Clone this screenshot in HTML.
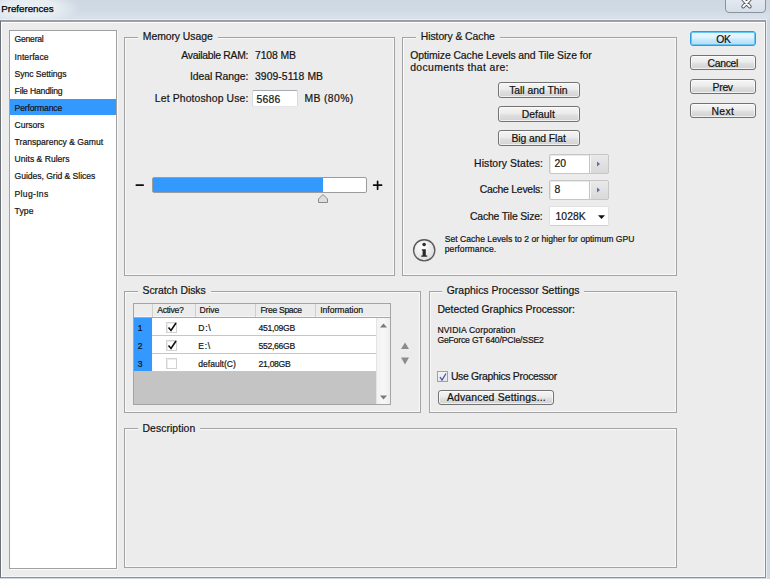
<!DOCTYPE html>
<html><head><meta charset="utf-8"><style>
html,body{margin:0;padding:0;width:770px;height:579px;overflow:hidden;background:#cfd9e4;}
body{position:relative;font-family:"Liberation Sans",sans-serif;}
.r{position:absolute;}
.t{position:absolute;white-space:nowrap;-webkit-text-stroke:0.2px currentColor;}
</style></head><body>
<div class="r" style="left:0px;top:0px;width:770px;height:579px;background:linear-gradient(#ced8e3,#d0dae5 10px,#d9e1ea 18px,#cfd9e4 20px,#cfd9e4);"></div>
<div class="r" style="left:-20px;top:-8px;width:100px;height:32px;background:radial-gradient(closest-side,rgba(236,241,246,0.95),rgba(236,241,246,0.8) 55%,rgba(236,241,246,0));"></div>
<div class="t" style="left:1.20px;top:3.60px;font-size:9.8px;line-height:9.8px;color:#000;letter-spacing:-0.032px;-webkit-text-stroke:0.25px #000;">Preferences</div>
<div class="r" style="left:725px;top:-2px;width:41px;height:15px;border:1px solid #8a949f;border-radius:0 0 4px 4px;background:linear-gradient(#e4eaf1,#d6dee8);box-sizing:border-box"></div>
<svg class="r" style="left:740px;top:-2px" width="13" height="12" viewBox="0 0 13 12"><path d="M3.3 1.5 L9.7 8.5 M9.7 1.5 L3.3 8.5" stroke="#4d525a" stroke-width="3.8" stroke-linecap="round"/><path d="M3.3 1.5 L9.7 8.5 M9.7 1.5 L3.3 8.5" stroke="#fbfbfb" stroke-width="2" stroke-linecap="round"/></svg>
<div class="r" style="left:0px;top:19px;width:766px;height:1px;background:#e8eef6;"></div>
<div class="r" style="left:766px;top:19px;width:1px;height:560px;background:#e6edf5;"></div>
<div class="r" style="left:0px;top:20px;width:766px;height:558px;background:#ececec;border:1px solid #8d9196;border-top:2px solid #9b9ea3;border-left-color:#6b7078;box-sizing:border-box;box-shadow:inset 1px 1px 0 #fff, inset -1px -1px 0 #f8f8f8;"></div>
<div class="r" style="left:9px;top:30px;width:108px;height:539px;background:#fff;border:1px solid #a0a0a0;box-sizing:border-box;box-shadow:1px 1px 0 #fafafa;"></div>
<div class="r" style="left:10px;top:99px;width:106px;height:16px;background:#3399ff;"></div>
<div class="t" style="left:14.60px;top:35.42px;font-size:8.6px;line-height:8.6px;color:#141414;letter-spacing:-0.244px;">General</div>
<div class="t" style="left:14.60px;top:52.55px;font-size:8.6px;line-height:8.6px;color:#141414;letter-spacing:0.068px;">Interface</div>
<div class="t" style="left:14.60px;top:69.68px;font-size:8.6px;line-height:8.6px;color:#141414;letter-spacing:-0.054px;">Sync Settings</div>
<div class="t" style="left:14.60px;top:86.81px;font-size:8.6px;line-height:8.6px;color:#141414;letter-spacing:-0.181px;">File Handling</div>
<div class="t" style="left:14.60px;top:103.94px;font-size:8.6px;line-height:8.6px;color:#141414;letter-spacing:-0.152px;">Performance</div>
<div class="t" style="left:14.60px;top:121.07px;font-size:8.6px;line-height:8.6px;color:#141414;letter-spacing:-0.064px;">Cursors</div>
<div class="t" style="left:14.60px;top:138.20px;font-size:8.6px;line-height:8.6px;color:#141414;">Transparency &amp; Gamut</div>
<div class="t" style="left:14.60px;top:155.33px;font-size:8.6px;line-height:8.6px;color:#141414;">Units &amp; Rulers</div>
<div class="t" style="left:14.60px;top:172.46px;font-size:8.6px;line-height:8.6px;color:#141414;letter-spacing:-0.049px;">Guides, Grid &amp; Slices</div>
<div class="t" style="left:14.60px;top:189.59px;font-size:8.6px;line-height:8.6px;color:#141414;letter-spacing:0.296px;">Plug-Ins</div>
<div class="t" style="left:14.60px;top:206.72px;font-size:8.6px;line-height:8.6px;color:#141414;letter-spacing:0.083px;">Type</div>
<div class="r" style="left:124px;top:37px;width:271px;height:239px;border:1px solid #a3a3a3;box-sizing:border-box;box-shadow: inset 0 0 0 1px #f9f9f9;"></div>
<div class="r" style="left:137.8px;top:34px;width:80.1px;height:6px;background:#ececec;"></div>
<div class="t" style="left:142.80px;top:32.49px;font-size:10.4px;line-height:10.4px;color:#141414;letter-spacing:-0.052px;">Memory Usage</div>
<div class="t" style="left:181.30px;top:51.49px;font-size:10.4px;line-height:10.4px;color:#141414;letter-spacing:-0.289px;">Available RAM:</div>
<div class="t" style="left:255.00px;top:51.49px;font-size:10.4px;line-height:10.4px;color:#141414;letter-spacing:-0.093px;">7108 MB</div>
<div class="t" style="left:189.90px;top:71.79px;font-size:10.4px;line-height:10.4px;color:#141414;letter-spacing:-0.040px;">Ideal Range:</div>
<div class="t" style="left:255.00px;top:71.79px;font-size:10.4px;line-height:10.4px;color:#141414;letter-spacing:0.058px;">3909-5118 MB</div>
<div class="t" style="left:154.80px;top:94.09px;font-size:10.4px;line-height:10.4px;color:#141414;letter-spacing:0.136px;">Let Photoshop Use:</div>
<div class="r" style="left:252px;top:90px;width:46px;height:17px;background:#fff;border:1px solid #d5d9dd;border-top-color:#a4abb3;border-bottom-color:#e4e6e8;border-radius:2px;box-sizing:border-box;"></div>
<div class="t" style="left:256.60px;top:94.79px;font-size:10.4px;line-height:10.4px;color:#141414;letter-spacing:0.188px;">5686</div>
<div class="t" style="left:304.40px;top:94.09px;font-size:10.4px;line-height:10.4px;color:#141414;letter-spacing:0.382px;">MB (80%)</div>
<svg class="r" style="left:130px;top:175px" width="260" height="20" viewBox="130 175 260 20"><path d="M136.3 185.1 H143.2 M373.6 185.1 H381.6 M377.6 181.3 V189.2" stroke="#0d0d0d" stroke-width="1.7" stroke-linecap="round"/></svg>
<div class="r" style="left:152px;top:177px;width:215px;height:16px;background:#fff;border:1px solid #9c9c9c;border-radius:2px;box-sizing:border-box;"></div>
<div class="r" style="left:153px;top:178px;width:170px;height:14px;background:#3399ff;"></div>
<svg class="r" style="left:317px;top:193px" width="12" height="11" viewBox="0 0 12 11"><path d="M1.5 9.5 L1.5 6 L6 1.5 L10.5 6 L10.5 9.5 Z" fill="#dedede" stroke="#8a8a8a" stroke-width="1" stroke-linejoin="round"/></svg>
<div class="r" style="left:402px;top:37px;width:275px;height:239px;border:1px solid #a3a3a3;box-sizing:border-box;box-shadow: inset 0 0 0 1px #f9f9f9;"></div>
<div class="r" style="left:415.8px;top:34px;width:84.3px;height:6px;background:#ececec;"></div>
<div class="t" style="left:420.80px;top:32.49px;font-size:10.4px;line-height:10.4px;color:#141414;letter-spacing:-0.071px;">History &amp; Cache</div>
<div class="t" style="left:410.20px;top:51.49px;font-size:10.4px;line-height:10.4px;color:#141414;letter-spacing:-0.070px;">Optimize Cache Levels and Tile Size for</div>
<div class="t" style="left:410.20px;top:63.19px;font-size:10.4px;line-height:10.4px;color:#141414;letter-spacing:0.358px;">documents that are:</div>
<div class="r" style="left:498px;top:82px;width:82px;height:16px;border:1px solid #727272;border-radius:3px;background:linear-gradient(#f5f5f5 0%,#ececec 45%,#dedede 60%,#d2d2d2 100%);box-shadow:inset 0 0 0 1px rgba(255,255,255,.65);box-sizing:border-box;"></div>
<div class="t" style="left:509.20px;top:86.39px;font-size:10.4px;line-height:10.4px;color:#111;letter-spacing:-0.036px;">Tall and Thin</div>
<div class="r" style="left:498px;top:106px;width:82px;height:16px;border:1px solid #727272;border-radius:3px;background:linear-gradient(#f5f5f5 0%,#ececec 45%,#dedede 60%,#d2d2d2 100%);box-shadow:inset 0 0 0 1px rgba(255,255,255,.65);box-sizing:border-box;"></div>
<div class="t" style="left:521.80px;top:110.39px;font-size:10.4px;line-height:10.4px;color:#111;letter-spacing:0.011px;">Default</div>
<div class="r" style="left:498px;top:130px;width:82px;height:16px;border:1px solid #727272;border-radius:3px;background:linear-gradient(#f5f5f5 0%,#ececec 45%,#dedede 60%,#d2d2d2 100%);box-shadow:inset 0 0 0 1px rgba(255,255,255,.65);box-sizing:border-box;"></div>
<div class="t" style="left:511.40px;top:134.39px;font-size:10.4px;line-height:10.4px;color:#111;letter-spacing:-0.087px;">Big and Flat</div>
<div class="t" style="left:474.10px;top:159.29px;font-size:10.4px;line-height:10.4px;color:#141414;letter-spacing:0.095px;">History States:</div>
<div class="t" style="left:479.70px;top:185.49px;font-size:10.4px;line-height:10.4px;color:#141414;letter-spacing:-0.221px;">Cache Levels:</div>
<div class="t" style="left:470.00px;top:211.89px;font-size:10.4px;line-height:10.4px;color:#141414;letter-spacing:-0.159px;">Cache Tile Size:</div>
<div class="r" style="left:549px;top:154px;width:60px;height:20px;background:#fff;border:1px solid #c6c6c6;border-radius:2px;box-sizing:border-box;box-shadow:inset 1px 1px 0 #e9e9e9;"></div>
<div class="r" style="left:589px;top:155px;width:19px;height:18px;background:linear-gradient(#e9e9e9,#d9d9d9);border-left:1px solid #c4c4c4;box-sizing:border-box;box-shadow:inset 1px 0 0 #f6f6f6;"></div>
<svg class="r" style="left:596px;top:161px" width="5" height="6" viewBox="0 0 5 6"><path d="M1 0.5 L4 3 L1 5.5 Z" fill="#5a6fa8"/></svg>
<div class="t" style="left:554.50px;top:159.29px;font-size:10.4px;line-height:10.4px;color:#141414;">20</div>
<div class="r" style="left:549px;top:180px;width:60px;height:20px;background:#fff;border:1px solid #c6c6c6;border-radius:2px;box-sizing:border-box;box-shadow:inset 1px 1px 0 #e9e9e9;"></div>
<div class="r" style="left:589px;top:181px;width:19px;height:18px;background:linear-gradient(#e9e9e9,#d9d9d9);border-left:1px solid #c4c4c4;box-sizing:border-box;box-shadow:inset 1px 0 0 #f6f6f6;"></div>
<svg class="r" style="left:596px;top:187px" width="5" height="6" viewBox="0 0 5 6"><path d="M1 0.5 L4 3 L1 5.5 Z" fill="#5a6fa8"/></svg>
<div class="t" style="left:554.50px;top:185.49px;font-size:10.4px;line-height:10.4px;color:#141414;">8</div>
<div class="r" style="left:549px;top:206px;width:60px;height:20px;background:#fff;border:1px solid #e0e0e0;border-bottom-color:#d0d0d0;border-radius:2px;box-sizing:border-box;"></div>
<div class="t" style="left:555.60px;top:211.89px;font-size:10.4px;line-height:10.4px;color:#141414;">1028K</div>
<svg class="r" style="left:598px;top:215px" width="7" height="4" viewBox="0 0 7 4"><path d="M0 0.3 L7 0.3 L3.5 4 Z" fill="#111"/></svg>
<svg class="r" style="left:412px;top:238px" width="25" height="25" viewBox="0 0 25 25"><defs><radialGradient id="ig" cx="40%" cy="35%" r="70%"><stop offset="0" stop-color="#ffffff"/><stop offset="1" stop-color="#dcdcdc"/></radialGradient></defs><circle cx="12.2" cy="12.3" r="10.6" fill="url(#ig)" stroke="#5a5a5a" stroke-width="1.4"/><circle cx="12.1" cy="6.4" r="1.75" fill="#2a2a2a"/><path d="M9.8 11.2 H13.8 V17.4 H15.2 V18.8 H9.2 V17.4 H10.6 V12.4 H9.8 Z" fill="#2a2a2a"/></svg>
<div class="t" style="left:444.70px;top:234.62px;font-size:8.6px;line-height:8.6px;color:#141414;letter-spacing:0.014px;">Set Cache Levels to 2 or higher for optimum GPU</div>
<div class="t" style="left:444.70px;top:244.52px;font-size:8.6px;line-height:8.6px;color:#141414;letter-spacing:0.078px;">performance.</div>
<div class="r" style="left:124px;top:291px;width:297px;height:122px;border:1px solid #a3a3a3;box-sizing:border-box;box-shadow: inset 0 0 0 1px #f9f9f9;"></div>
<div class="r" style="left:137.5px;top:288px;width:73px;height:6px;background:#ececec;"></div>
<div class="t" style="left:142.50px;top:286.19px;font-size:10.4px;line-height:10.4px;color:#141414;letter-spacing:-0.026px;">Scratch Disks</div>
<div class="r" style="left:133px;top:303px;width:258px;height:102px;background:#c4c4c4;border:1px solid #a4a4a4;box-sizing:border-box;"></div>
<div class="r" style="left:134px;top:304px;width:256px;height:14px;background:#ececec;border-bottom:1px solid #a8a8a8;box-sizing:border-box;box-shadow:inset 0 -1px 0 #f7f7f7;"></div>
<div class="r" style="left:152px;top:304px;width:1px;height:13px;background:#cfcfcf;"></div>
<div class="r" style="left:195px;top:304px;width:1px;height:13px;background:#cfcfcf;"></div>
<div class="r" style="left:255px;top:304px;width:1px;height:13px;background:#cfcfcf;"></div>
<div class="r" style="left:315px;top:304px;width:1px;height:13px;background:#cfcfcf;"></div>
<div class="t" style="left:157.30px;top:306.22px;font-size:8.6px;line-height:8.6px;color:#141414;letter-spacing:-0.300px;">Active?</div>
<div class="t" style="left:199.60px;top:306.22px;font-size:8.6px;line-height:8.6px;color:#141414;letter-spacing:-0.069px;">Drive</div>
<div class="t" style="left:260.40px;top:306.22px;font-size:8.6px;line-height:8.6px;color:#141414;letter-spacing:-0.300px;">Free Space</div>
<div class="t" style="left:320.20px;top:306.22px;font-size:8.6px;line-height:8.6px;color:#141414;letter-spacing:-0.021px;">Information</div>
<div class="r" style="left:134px;top:318px;width:18px;height:53px;background:#3399ff;"></div>
<div class="r" style="left:152px;top:318px;width:224px;height:17px;background:#fff;"></div>
<div class="r" style="left:152px;top:335px;width:224px;height:1px;background:#c6c6c6;"></div>
<div class="t" style="left:137.80px;top:323.92px;font-size:8.6px;line-height:8.6px;color:#111;">1</div>
<div class="r" style="left:166px;top:322px;width:11px;height:11px;background:#fff;border:1px solid #d2d2d2;box-sizing:border-box;box-shadow:inset 1px 1px 0 #ececec;"></div>
<svg class="r" style="left:166px;top:321px" width="12" height="12" viewBox="0 0 12 12"><path d="M2.5 6.5 L5 9.5 L10 2" fill="none" stroke="#111" stroke-width="1.6"/></svg>
<div class="t" style="left:198.30px;top:323.92px;font-size:8.6px;line-height:8.6px;color:#141414;letter-spacing:0.703px;">D:\</div>
<div class="t" style="left:258.60px;top:323.92px;font-size:8.6px;line-height:8.6px;color:#141414;letter-spacing:-0.300px;">451,09GB</div>
<div class="r" style="left:152px;top:336px;width:224px;height:17px;background:#fff;"></div>
<div class="r" style="left:152px;top:353px;width:224px;height:1px;background:#c6c6c6;"></div>
<div class="t" style="left:137.80px;top:341.92px;font-size:8.6px;line-height:8.6px;color:#111;">2</div>
<div class="r" style="left:166px;top:340px;width:11px;height:11px;background:#fff;border:1px solid #d2d2d2;box-sizing:border-box;box-shadow:inset 1px 1px 0 #ececec;"></div>
<svg class="r" style="left:166px;top:339px" width="12" height="12" viewBox="0 0 12 12"><path d="M2.5 6.5 L5 9.5 L10 2" fill="none" stroke="#111" stroke-width="1.6"/></svg>
<div class="t" style="left:198.30px;top:341.92px;font-size:8.6px;line-height:8.6px;color:#141414;letter-spacing:0.690px;">E:\</div>
<div class="t" style="left:258.60px;top:341.92px;font-size:8.6px;line-height:8.6px;color:#141414;letter-spacing:-0.300px;">552,66GB</div>
<div class="r" style="left:152px;top:354px;width:224px;height:17px;background:#fff;"></div>
<div class="r" style="left:152px;top:371px;width:224px;height:1px;background:#c6c6c6;"></div>
<div class="t" style="left:137.80px;top:359.92px;font-size:8.6px;line-height:8.6px;color:#111;">3</div>
<div class="r" style="left:166px;top:358px;width:11px;height:11px;background:#fff;border:1px solid #d2d2d2;box-sizing:border-box;box-shadow:inset 1px 1px 0 #ececec;"></div>
<div class="t" style="left:198.30px;top:359.92px;font-size:8.6px;line-height:8.6px;color:#141414;letter-spacing:-0.019px;">default(C)</div>
<div class="t" style="left:258.60px;top:359.92px;font-size:8.6px;line-height:8.6px;color:#141414;letter-spacing:-0.300px;">21,08GB</div>
<div class="r" style="left:376px;top:318px;width:14px;height:86px;background:linear-gradient(90deg,#f2f2f2,#f7f7f7 50%,#eeeeee);border-left:1px solid #e4e4e4;box-sizing:border-box;"></div>
<svg class="r" style="left:380px;top:323px" width="7" height="5" viewBox="0 0 7 5"><path d="M0 4.5 L3.5 0.5 L7 4.5 Z" fill="#7a7a7a"/></svg>
<svg class="r" style="left:380px;top:395px" width="7" height="5" viewBox="0 0 7 5"><path d="M0 0.5 L7 0.5 L3.5 4.5 Z" fill="#7a7a7a"/></svg>
<svg class="r" style="left:400px;top:342px" width="10" height="24" viewBox="0 0 10 24"><path d="M1 7 L5 0.5 L9 7 Z" fill="#8c8c8c"/><path d="M1 15.5 L9 15.5 L5 22.5 Z" fill="#8c8c8c"/></svg>
<div class="r" style="left:429px;top:291px;width:248px;height:122px;border:1px solid #a3a3a3;box-sizing:border-box;box-shadow: inset 0 0 0 1px #f9f9f9;"></div>
<div class="r" style="left:441.7px;top:288px;width:142.6px;height:6px;background:#ececec;"></div>
<div class="t" style="left:446.70px;top:285.99px;font-size:10.4px;line-height:10.4px;color:#141414;letter-spacing:0.043px;">Graphics Processor Settings</div>
<div class="t" style="left:437.40px;top:305.49px;font-size:10.4px;line-height:10.4px;color:#141414;letter-spacing:-0.041px;">Detected Graphics Processor:</div>
<div class="t" style="left:437.40px;top:326.12px;font-size:8.6px;line-height:8.6px;color:#141414;letter-spacing:0.143px;">NVIDIA Corporation</div>
<div class="t" style="left:437.40px;top:336.02px;font-size:8.6px;line-height:8.6px;color:#141414;letter-spacing:-0.163px;">GeForce GT 640/PCIe/SSE2</div>
<div class="r" style="left:437px;top:371px;width:11px;height:11px;background:linear-gradient(#f4f4f4,#e6e6e6);border:1px solid #a2a2a2;box-sizing:border-box;"></div>
<svg class="r" style="left:438px;top:372px" width="10" height="10" viewBox="0 0 10 10"><path d="M2 5 L4 8 L8 1.5" fill="none" stroke="#4656b0" stroke-width="1.3"/></svg>
<div class="t" style="left:450.90px;top:372.19px;font-size:10.4px;line-height:10.4px;color:#141414;letter-spacing:-0.297px;">Use Graphics Processor</div>
<div class="r" style="left:438px;top:390px;width:116px;height:15px;border:1px solid #727272;border-radius:3px;background:linear-gradient(#f5f5f5 0%,#ececec 45%,#dedede 60%,#d2d2d2 100%);box-shadow:inset 0 0 0 1px rgba(255,255,255,.65);box-sizing:border-box;"></div>
<div class="t" style="left:446.90px;top:393.49px;font-size:10.4px;line-height:10.4px;color:#111;letter-spacing:0.183px;">Advanced Settings...</div>
<div class="r" style="left:124px;top:428px;width:553px;height:140px;border:1px solid #a3a3a3;box-sizing:border-box;box-shadow: inset 0 0 0 1px #f9f9f9;"></div>
<div class="r" style="left:137.5px;top:425px;width:62.9px;height:6px;background:#ececec;"></div>
<div class="t" style="left:142.50px;top:423.79px;font-size:10.4px;line-height:10.4px;color:#141414;letter-spacing:0.071px;">Description</div>
<div class="r" style="left:690px;top:31px;width:66px;height:15px;border:1px solid #2c9ce0;border-radius:3px;background:linear-gradient(#eef8fe 0%,#dff2fd 45%,#c6e8fb 60%,#b3def7 100%);box-shadow:inset 0 0 0 1px #66c6f6;box-sizing:border-box;"></div>
<div class="t" style="left:716.20px;top:35.19px;font-size:10.4px;line-height:10.4px;color:#111;letter-spacing:-0.300px;">OK</div>
<div class="r" style="left:690px;top:55px;width:66px;height:15px;border:1px solid #727272;border-radius:3px;background:linear-gradient(#f5f5f5 0%,#ececec 45%,#dedede 60%,#d2d2d2 100%);box-shadow:inset 0 0 0 1px rgba(255,255,255,.65);box-sizing:border-box;"></div>
<div class="t" style="left:707.50px;top:59.19px;font-size:10.4px;line-height:10.4px;color:#111;letter-spacing:-0.300px;">Cancel</div>
<div class="r" style="left:690px;top:79px;width:66px;height:15px;border:1px solid #727272;border-radius:3px;background:linear-gradient(#f5f5f5 0%,#ececec 45%,#dedede 60%,#d2d2d2 100%);box-shadow:inset 0 0 0 1px rgba(255,255,255,.65);box-sizing:border-box;"></div>
<div class="t" style="left:712.60px;top:83.19px;font-size:10.4px;line-height:10.4px;color:#111;letter-spacing:-0.300px;">Prev</div>
<div class="r" style="left:690px;top:103px;width:66px;height:15px;border:1px solid #727272;border-radius:3px;background:linear-gradient(#f5f5f5 0%,#ececec 45%,#dedede 60%,#d2d2d2 100%);box-shadow:inset 0 0 0 1px rgba(255,255,255,.65);box-sizing:border-box;"></div>
<div class="t" style="left:711.60px;top:107.19px;font-size:10.4px;line-height:10.4px;color:#111;letter-spacing:0.274px;">Next</div>
</body></html>
